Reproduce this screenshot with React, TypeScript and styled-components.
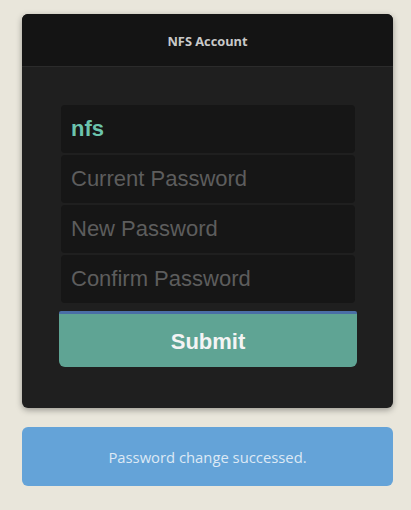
import React from "react";
import styled, { createGlobalStyle } from "styled-components";

const Global = createGlobalStyle`
  html, body { margin: 0; padding: 0; background: #e9e6db; }
  body { font-family: "Liberation Sans", Arial, sans-serif; }
`;

const Page = styled.div`
  padding: 14px 18px 0 22px;
  display: flex;
  flex-direction: column;
  gap: 19px;
  width: 371px;
`;

const Card = styled.div`
  background: #1f1f1f;
  border-radius: 6px;
  overflow: hidden;
  box-shadow: 0 2px 6px rgba(0, 0, 0, 0.35);
`;

const Header = styled.div`
  height: 53px;
  background: #141414;
  border-bottom: 1px solid #2b2b2b;
  display: flex;
  align-items: center;
  justify-content: center;
  padding-top: 2px;
  box-sizing: border-box;
  font-family: "Open Sans", sans-serif;
  font-weight: 700;
  font-size: 12.8px;
  color: #c9c9c9;
`;

const Body = styled.div`
  padding: 38px 36px 41px 37px;
  display: flex;
  flex-direction: column;
`;

const Fields = styled.div`
  display: flex;
  flex-direction: column;
  gap: 2px;
  padding: 0 2px;
`;

const Field = styled.div<{ $filled?: boolean }>`
  height: 48px;
  background: #161616;
  border-radius: 4px;
  display: flex;
  align-items: center;
  padding: 0 10px;
  font-size: 22px;
  font-family: "Liberation Sans", Arial, sans-serif;
  font-weight: ${(p) => (p.$filled ? 700 : 400)};
  color: ${(p) => (p.$filled ? "#6cc4ad" : "#5d5d5d")};
`;

const FocusBar = styled.div`
  height: 3px;
  margin-top: 8px;
  background: #4a6ea6;
  border-radius: 2px 2px 0 0;
`;

const Submit = styled.button`
  height: 53px;
  border: none;
  border-radius: 0 0 6px 6px;
  background: #5fa494;
  color: #f4f4f4;
  font-family: "Liberation Sans", Arial, sans-serif;
  font-weight: 700;
  font-size: 22px;
  display: flex;
  align-items: center;
  justify-content: center;
  padding: 2px 0 0;
`;

const Notice = styled.div`
  height: 59px;
  background: #64a3d8;
  border-radius: 6px;
  display: flex;
  align-items: center;
  justify-content: center;
  font-family: "Open Sans", sans-serif;
  font-size: 14.8px;
  color: #dde9f5;
`;

export default function App() {
  return (
    <>
      <Global />
      <Page>
        <Card>
          <Header>NFS Account</Header>
          <Body>
            <Fields>
              <Field $filled>nfs</Field>
              <Field>Current Password</Field>
              <Field>New Password</Field>
              <Field>Confirm Password</Field>
            </Fields>
            <FocusBar />
            <Submit>Submit</Submit>
          </Body>
        </Card>
        <Notice>Password change successed.</Notice>
      </Page>
    </>
  );
}
